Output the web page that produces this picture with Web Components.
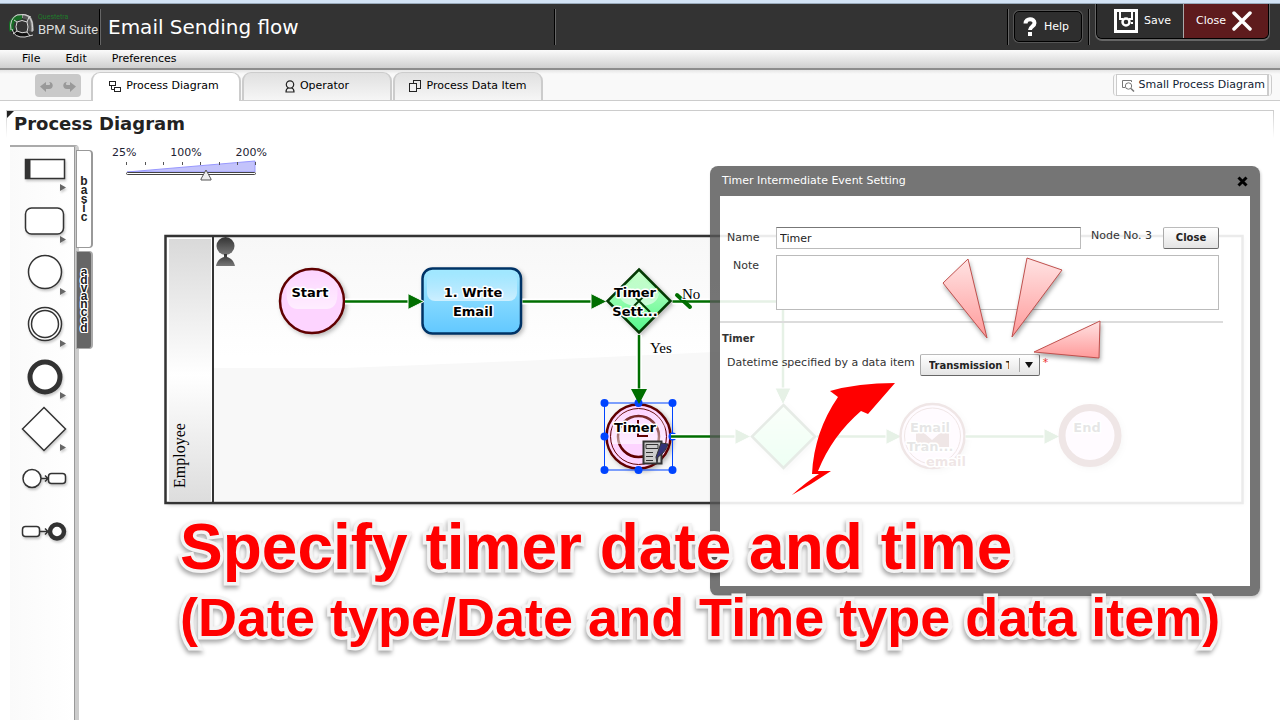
<!DOCTYPE html>
<html lang="en">
<head>
<meta charset="utf-8">
<title>Email Sending flow</title>
<style>
  html, body { height: 100%; margin: 0; }
  body { font: 11px/14px "DejaVu Sans", sans-serif; color: #000; background: #fff; overflow: hidden; }
</style>
</head>
<body>
<app-shell>
  <title-bar slot="title" heading="Email Sending flow"></title-bar>
  <menu-bar slot="menu"></menu-bar>
  <tab-strip slot="tabs"></tab-strip>
  <work-area>
    <shape-palette slot="palette"></shape-palette>
    <zoom-slider slot="zoom"></zoom-slider>
    <flow-diagram slot="diagram"></flow-diagram>
    <event-dialog slot="dialog"></event-dialog>
    <big-caption slot="caption"><span slot="first">Specify timer date and time</span><span slot="second">(Date type/Date and Time type data item)</span></big-caption>
  </work-area>
</app-shell>

<script>
const define = (name, html, setup) => customElements.define(name, class extends HTMLElement {
  constructor() {
    super();
    this.attachShadow({ mode: "open" }).innerHTML = html;
    if (setup) setup(this, this.shadowRoot);
  }
});

define("app-shell", `
<style>
  :host { display: flex; flex-direction: column; min-height: 100vh; border-top: 3px solid #d3e3f5; box-sizing: border-box; }
  .work { flex: 1; display: flex; min-width: 0; }
</style>
<slot name="title"></slot><slot name="menu"></slot><slot name="tabs"></slot>
<div class="work"><slot></slot></div>`);

define("title-bar", `
<style>
  :host { display: block; background: #333; border-top: 1px solid #9ab; }
  header { display: flex; height: 46px; }
  .logo { display: flex; gap: 3px; width: 90px; padding: 9px 0 0 9px; }
  .brand { display: flex; flex-direction: column; font: 13px/15px Roboto, sans-serif; color: #ddd; white-space: nowrap; }
  .brand small { font: 7px/9px Roboto, sans-serif; color: #1f7a2b; }
  .sep { width: 1px; margin: 5px 0; background: #000; border-right: 1px solid #666; }
  h1 { width: 453px; margin: 0; padding-left: 7px; box-sizing: border-box; font: 20px/46px "DejaVu Sans", sans-serif; color: #fff; }
  .gap { flex: 1; }
  button { font: 11px/14px "DejaVu Sans", sans-serif; color: #fff; display: flex; align-items: center; border: 0; padding: 0; background: #2e2e2e; }
  .help { height: 31px; margin: 7px 6px 0 5px; width: 68px; gap: 7px; padding-left: 8px; border: 1px solid #000; border-radius: 5px; box-shadow: 0 0 0 1px #555; }
  .actions { display: flex; height: 35px; margin: 0 11px 0 6px; border-radius: 0 0 6px 6px; overflow: hidden; border: 1px solid #000; border-top: 0; box-shadow: 0 1px 0 1px #666; box-sizing: border-box; }
  .save { width: 87px; gap: 6px; padding-left: 17px; border-right: 1px solid #aaa; }
  .close { width: 84px; gap: 6px; padding-left: 12px; background: #5e1b1d; }
</style>
<header>
  <div class="logo">
    <svg width="26" height="26" viewBox="0 0 26 26" fill="none">
      <path d="M4 8Q6 3 13 3q8 0 9 6l1 9" stroke="#999" stroke-width="4"/>
      <path d="M3 18C0 9 5 4 13 4" stroke="#176b25" stroke-width="5"/>
      <path d="M14 4q5 0 6 5l1 9" stroke="#555" stroke-width="3"/>
      <path d="M4 18q4 5 16 4" stroke="#111" stroke-width="4"/>
      <path d="M2 17Q0 6 8 2q8-2 14 2M3 16q2 9 13 8l8-2M8 9q5-3 10 0 2 5 0 10-5 2-10-1-2-4 0-9zM8 9L5 7M18 9l2-5q5 5 3 15M8 18l-4 3M18 19l3 4" stroke="#d8d8d8"/>
    </svg>
    <div class="brand"><small>Questetra</small><span>BPM Suite</span></div>
  </div>
  <div class="sep"></div>
  <h1></h1>
  <div class="sep"></div>
  <div class="gap"></div>
  <div class="sep"></div>
  <button class="help"><svg width="14" height="20" viewBox="0 0 14 20"><path d="M2.500 6.500C2.500 0.800 11.500 0.800 11.500 6c0 3.500-4.500 3.500-4.500 7" fill="none" stroke="#fff" stroke-width="4"/><rect x="5" y="15" width="4" height="4" fill="#fff"/></svg>Help</button>
  <div class="sep"></div>
  <div class="actions">
    <button class="save"><svg width="24" height="24" viewBox="0 0 24 24" fill="none" stroke="#fff"><path d="M1.500 1.500h21v21h-21z" stroke-width="3"/><path d="M6 2v8h3M18 2v8h-3" stroke-width="2"/><circle cx="12" cy="13" r="3.500" stroke-width="2.500"/><path d="M17 14h2" stroke-width="2"/></svg>Save</button>
    <button class="close">Close<svg width="20" height="20" viewBox="0 0 20 20"><path d="M2 2l16 16M18 2L2 18" stroke="#fff" stroke-width="3.500" stroke-linecap="round"/></svg></button>
  </div>
</header>`, (host, root) => root.querySelector("h1").textContent = host.getAttribute("heading") || "Email Sending flow");

define("menu-bar", `
<style>
  :host { display: block; background: linear-gradient(#fbfbfb, #cfcfcf); border-bottom: 2px solid #8c8c8c; }
  nav { display: flex; gap: 25px; height: 18px; padding-left: 22px; }
  a { color: #000; text-decoration: none; line-height: 18px; }
</style>
<nav><a href="#file">File</a><a href="#edit">Edit</a><a href="#preferences">Preferences</a></nav>`);

define("tab-strip", `
<style>
  :host { display: flex; height: 30px; background: linear-gradient(#e6e6e6, #f9f9f9 4px); border-bottom: 1px solid #ccc; padding: 0 8px 0 35px; }
  button { font: 11px/14px "DejaVu Sans", sans-serif; color: #000; border: 0; padding: 0; }
  .history { display: flex; align-items: center; gap: 8px; height: 23px; margin: 4px 10px 0 0; padding: 0 5px; background: #c9c9c9; border-radius: 4px; }
  .history button { background: none; display: flex; }
  .tabs { display: flex; gap: 1px; margin: 2px 0 0; }
  .tabs button { display: flex; align-items: center; justify-content: center; gap: 5px; width: 150px; height: 28px; padding-bottom: 1px; box-sizing: border-box; border: 1px solid #ccc; border-width: 1px 2px 0; border-radius: 9px 9px 0 0; background: linear-gradient(#e0e0e0, #f6f6f6); }
  .tabs .on { height: 29px; background: #fff; padding: 0 4px 2px 0; }
  .gap { flex: 1; }
  .holder { margin-top: 4px; height: 22px; padding: 0 2px; border: solid #ccc; border-width: 0 1px; border-radius: 4px; }
  .small { display: flex; align-items: center; gap: 4px; height: 22px; padding: 0 2px 0 4px; box-sizing: border-box; border: 1px solid #ccc; border-right-width: 2px; background: #fff; color: #123; }
</style>
<div class="history">
  <button aria-label="Undo"><svg width="14" height="14" viewBox="0 0 14 14"><path d="M0 7.500L6 3v3h3c1.500 0 1.500-2 0-3 5 0 5 7 0 7H6v3z" fill="#999"/></svg></button>
  <button aria-label="Redo"><svg width="14" height="14" viewBox="0 0 14 14"><path d="M14 7.500L8 3v3H5C3.500 6 3.500 4 5 3c-5 0-5 7 0 7h3v3z" fill="#999"/></svg></button>
</div>
<div class="tabs">
  <button class="on"><svg width="12" height="12" viewBox="0 0 12 12" fill="none" stroke="#222"><rect x=".5" y="1.500" width="6" height="4"/><rect x="5.500" y="7.500" width="6" height="4"/><path d="M2.500 6v3.500H5"/></svg>Process Diagram</button>
  <button><svg width="10" height="13" viewBox="0 0 10 13" fill="none" stroke="#222" stroke-width="1.200"><circle cx="5" cy="4.500" r="3.700"/><path d="M3.500 8C1.500 8.500 1 10 1 12h8c0-2-.5-3.500-2.500-4"/></svg>Operator</button>
  <button><svg width="12" height="12" viewBox="0 0 12 12" fill="none" stroke="#222"><rect x="4.500" y=".5" width="7" height="8"/><rect x=".5" y="3.500" width="7" height="8" fill="#eee"/></svg>Process Data Item</button>
</div>
<div class="gap"></div>
<div class="holder"><button class="small"><svg width="14" height="13" viewBox="0 0 14 13" fill="none" stroke="#777"><path d="M4 8.500H1.500v-7h9V3"/><circle cx="7.500" cy="7" r="3.200" fill="#fff"/><path d="M10 9.500l3 3" stroke-width="1.500"/></svg>Small Process Diagram</button></div>`);

define("work-area", `
<style>
  :host { flex: 1; min-width: 0; display: flex; flex-direction: column; position: relative; margin: 9px 6px 0; border-top: 1px solid #ccc; }
  :host::before { content: ""; position: absolute; inset: -1px 0 auto; height: 28px; border: 1px solid #ccc; border-width: 0 1px; -webkit-mask: linear-gradient(#000, transparent); mask: linear-gradient(#000, transparent); }
  .mark { position: absolute; left: 1px; top: 0; width: 7px; height: 7px; background: #222; clip-path: polygon(0 0, 100% 0, 0 100%); }
  h2 { margin: 0; padding: 1px 0 9px 8px; font: bold 18px/24px "DejaVu Sans", sans-serif; color: #222; }
  .row { display: flex; flex: 1; min-width: 0; }
  .canvas { display: flex; flex-direction: column; flex: 1; min-width: 0; }
</style>
<div class="mark"></div>
<h2>Process Diagram</h2>
<div class="row">
  <slot name="palette"></slot>
  <div class="canvas"><slot name="zoom"></slot><slot name="diagram"></slot></div>
</div>
<slot name="dialog"></slot>
<slot name="caption"></slot>`);

const pick = `<path d="M50 35l6 3.500-6 3.500z" fill="#666" stroke="none"/>`;
const shapes = [
  `<rect x="15.500" y="10.500" width="39" height="19"/><path d="M18 10v20" stroke-width="5"/>${pick}`,
  `<rect x="15.500" y="7" width="38" height="26" rx="6"/>${pick}`,
  `<circle cx="35" cy="19" r="16.500"/>${pick}`,
  `<circle cx="35" cy="19" r="16.500"/><circle cx="35" cy="19" r="13.500"/>${pick}`,
  `<circle cx="35" cy="20" r="15" stroke-width="5"/>${pick}`,
  `<path d="M34 -1.500l21.500 21.500-21.500 21.500L12.500 20z"/>${pick}`,
  `<circle cx="22" cy="17.500" r="9"/><path d="M31 17.500h7m-3-3l3 3-3 3"/><rect x="38.500" y="12.500" width="17" height="10" rx="3"/>`,
  `<rect x="12.500" y="13.500" width="17" height="10" rx="3"/><path d="M30 18.500h8m-3-3l3 3-3 3"/><circle cx="47" cy="18.500" r="7" stroke-width="4.500"/>`
];
define("shape-palette", `
<style>
  :host { display: flex; flex: none; width: 87px; margin-left: 4px; }
  .rail { flex: none; width: 65px; display: flex; flex-direction: column; padding-top: 2px; border-top: 2px solid #aaa; border-right: 4px solid #ccc; border-top-right-radius: 4px; background: linear-gradient(90deg, #fafafa, #fff); box-shadow: inset -1px 0 #999; }
  .rail svg { display: block; width: 66px; height: 52px; overflow: visible; filter: drop-shadow(1px 2px 1px #0003); }
  .side { display: flex; flex-direction: column; gap: 3px; margin: 5px 0 0 -3px; }
  .side button { display: flex; align-items: center; justify-content: center; width: 17px; height: 98px; padding: 0; box-sizing: border-box; border: 1px solid #999; border-right-width: 2px; border-radius: 0 4px 4px 0; background: #fff; color: #222; font: bold 12px/9px "Liberation Sans", sans-serif; }
  .side span { width: 9px; word-break: break-all; text-align: center; }
  .side .adv { background: #666; line-height: 8px; border-color: #aaa; text-shadow: 1px 0 #fff, -1px 0 #fff, 0 1px #fff, 0 -1px #fff, 1px 1px #fff, -1px -1px #fff, -1px 1px #fff, 1px -1px #fff; }
</style>
<div class="rail">${shapes.map(s => `<svg viewBox="0 0 66 52" fill="#fff" stroke="#333" stroke-width="1.500">${s}</svg>`).join("")}</div>
<div class="side"><button><span>basic</span></button><button class="adv"><span>advanced</span></button></div>`);

define("zoom-slider", `
<style>
  :host { display: block; width: 160px; padding: 1px 0 24px 15px; color: #223; }
  .marks { display: flex; justify-content: space-between; line-height: 14px; width: 155px; }
  .scale { display: grid; width: 132px; margin-left: 13px; }
  .scale > * { grid-area: 1 / 1; }
  svg { display: block; }
  input { -webkit-appearance: none; appearance: none; width: 132px; height: 22px; margin: 0; background: none; }
  input::-webkit-slider-thumb { -webkit-appearance: none; width: 12px; height: 12px; margin-top: 7px; background: url("data:image/svg+xml,%3Csvg xmlns='http://www.w3.org/2000/svg' width='12' height='12'%3E%3Cpath d='M6 1L11 10V11H1V10Z' fill='%23eee' stroke='%23555'/%3E%3C/svg%3E"); }
</style>
<div class="marks"><span>25%</span><span>100%</span><span>200%</span></div>
<div class="scale">
  <svg width="132" height="22" viewBox="0 0 132 22" fill="none"><path d="M2 12L130 1v11z" fill="#c3c3fb" stroke="#99f"/><path d="M1.500 2v3M20.500 2v3M38.500 2v3M57.500 2v3M75.500 2v3M94.500 2v3M112.500 2v3M130.500 2v3" stroke="#555"/><rect x="1.500" y="12.500" width="129" height="2" rx="1" fill="#fff" stroke="#444"/></svg>
  <input type="range" min="0" max="200" value="125" aria-label="Zoom">
</div>`);

const wire = (d, head) => `<path d="${d}" stroke="#fff" stroke-width="6"/><path d="${d}" stroke="#006e00" stroke-width="2.500"/>${head ? `<path d="${head}" fill="#006e00" stroke="#fff" stroke-width="1"/>` : ""}`;
const handles = [[604.5,403],[672.5,403],[604.5,436.5],[672.5,436.5],[604.5,470],[638.500,470],[672.5,470],[638.500,403]];
define("flow-diagram", `
<style>
  :host { display: block; overflow: hidden; margin-right: -6px; }
  svg { display: block; }
  .label { font: bold 13px "DejaVu Sans", sans-serif; text-anchor: middle; fill: #000; stroke: #fff; stroke-width: 3px; stroke-linejoin: round; paint-order: stroke; }
  .serif { font: 15px "Liberation Serif", serif; fill: #000; stroke: #fff; stroke-width: 2px; paint-order: stroke; }
  .node { filter: drop-shadow(2px 2px 2px #0004); }
</style>
<svg width="1183" height="310" viewBox="97 206 1183 310" fill="none">
  <defs>
    <linearGradient id="lane" x1="0" x2="0" y1="0" y2="1"><stop stop-color="#f7f7f7"/><stop offset=".45" stop-color="#fff"/></linearGradient>
    <linearGradient id="side" x1="0" x2="0" y1="0" y2="1"><stop stop-color="#d9d9d9"/><stop offset=".52" stop-color="#fff"/><stop offset="1" stop-color="#ddd"/></linearGradient>
    <linearGradient id="task" x1="0" x2="0" y1="0" y2="1"><stop stop-color="#a4e9ff"/><stop offset="1" stop-color="#62c8ff"/></linearGradient>
    <linearGradient id="gate" x1="0" x2="0" y1="0" y2="1"><stop stop-color="#cfc"/><stop offset="1" stop-color="#52f98b"/></linearGradient>
    <linearGradient id="gloss" x1="0" x2="0" y1="0" y2="1"><stop stop-color="#fff" stop-opacity="0"/><stop offset="1" stop-color="#fff" stop-opacity=".6"/></linearGradient>
    <linearGradient id="man" x1="0" x2="0" y1="0" y2="1"><stop stop-color="#333"/><stop offset="1" stop-color="#777"/></linearGradient>
  </defs>
  <rect x="165.500" y="235.500" width="1077" height="267" fill="#fff" class="node"/>
  <rect x="214" y="237" width="1027" height="264" fill="url(#lane)"/>
  <path d="M214 368H345Q620 358 1241 325V501H214z" fill="#f8f8f8"/>
  <rect x="169" y="239" width="42" height="262" fill="url(#side)"/>
  <rect x="165.500" y="236" width="1077" height="267" stroke="#333" stroke-width="2.500"/>
  <path d="M213 236v266" stroke="#333" stroke-width="2"/>
  <circle cx="225.500" cy="246" r="9" fill="url(#man)"/><path d="M224 254h3v3c4 1 7 4 8 9h-19c1-5 4-8 8-9z" fill="url(#man)"/>
  <text class="serif" style="font-size:16px;stroke:none" transform="translate(185 488) rotate(-90)">Employee</text>

  <g class="node" stroke="#600000" stroke-width="2.500"><circle cx="312" cy="301" r="32" fill="#fdd4ff"/></g>
  <path d="M287 283q25-24 50 0 3 26-10 26h-30q-13 0-10-26z" fill="url(#gloss)"/>
  <rect class="node" x="422.500" y="268.500" width="98.500" height="65" rx="10" fill="url(#task)" stroke="#036" stroke-width="2.500"/>
  <rect x="427" y="272" width="90" height="29" rx="8" fill="url(#gloss)"/>
  ${wire("M345 301.500H410", "M408 293.500L424 301.500 408 309.500z")}
  ${wire("M522.500 301.500H593", "M591 293.500L607 301.500 591 309.500z")}
  <path class="node" d="M639 269.500L670.500 301 639 332.500 607.500 301z" fill="url(#gate)" stroke="#043a04" stroke-width="2.500"/>
  <path d="M619 294L639 274l20 20q-2 12-20 12t-20-12z" fill="url(#gloss)"/>
  <path d="M628 290l22 22M650 290l-22 22" stroke="#043a04" stroke-width="2"/>
  ${wire("M672.500 301.500H783V390", "M775 388h16L783 405z")}
  ${wire("M639 335V391", "M631 389h16L639 405z")}
  <path d="M677 295l13 12" stroke="#006e00" stroke-width="4" stroke-linecap="round"/>
  <text class="serif" x="682" y="299">No</text>
  <text class="serif" x="650" y="353">Yes</text>

  <g stroke="#600000"><circle class="node" cx="638.500" cy="436.500" r="32" fill="#fdd4ff" stroke-width="2.500"/><circle cx="638.500" cy="436.500" r="28"/><circle cx="638.500" cy="436.500" r="20.500" stroke-width="2.500"/></g>
  <path d="M612 422q26-30 53 0v22h-53z" fill="url(#gloss)"/>
  <path d="M638 420v16h10" stroke="#600000" stroke-width="2"/>
  ${wire("M672.500 436.500H737", "M735 428.500L751 436.500 735 444.500z")}
  <rect x="604.500" y="403" width="68" height="67" stroke="#04f"/>
  ${handles.map(([x, y]) => `<circle cx="${x}" cy="${y}" r="4" fill="#04f"/>`).join("")}
  <path d="M631 389h16L639 404z" fill="#006e00"/>
  <path d="M671 436.500h10" stroke="#fff" stroke-width="5"/><path d="M671 436.500h10" stroke="#006e00" stroke-width="2.500"/>
  <path d="M643.500 441.500h18v22h-18z" fill="#ccc" stroke="#333" stroke-width="2"/><path d="M646 444.500h12v4h-12zM646 452.500h7M646 456.500h7M646 460.500h7" stroke="#333"/><path d="M656 457l5-14 7 1q-2 8-10 13l-1 6z" fill="#337" stroke="#333"/>

  <path class="node" d="M783.500 405L815 436.500 783.500 468 752 436.500z" fill="url(#gate)" stroke="#043a04" stroke-width="2.500"/>
  ${wire("M817 436.500H888", "M886 428.500L902 436.500 886 444.500z")}
  <g stroke="#600000" fill="#fdd4ff"><circle class="node" cx="932.500" cy="436" r="32" stroke-width="2.500"/><circle cx="932.500" cy="436" r="28"/></g>
  <path d="M916 433h8l8 7 8-7h9v14h-33z" fill="#600000"/>
  ${wire("M965.500 436.500H1046", "M1044 428.500L1060 436.500 1044 444.500z")}
  <circle class="node" cx="1090" cy="435.500" r="28" fill="#fdd4ff" stroke="#600000" stroke-width="7"/>

  <text class="label" x="310" y="297">Start</text>
  <text class="label" x="473" y="297">1. Write</text><text class="label" x="473" y="316">Email</text>
  <text class="label" x="635" y="297">Timer</text><text class="label" x="635" y="316">Sett...</text>
  <text class="label" x="635" y="432">Timer</text>
  <text class="label" x="930" y="432">Email</text><text class="label" x="930" y="451">Tran...</text>
  <text class="label" x="946" y="466" style="fill:#600000">email</text>
  <text class="label" x="1087" y="432">End</text>
</svg>`);

define("event-dialog", `
<style>
  :host { position: absolute; right: 14px; top: 55px; width: 550px; display: block; color: #333; --frame: rgba(87,87,87,.82); }
  .box { border-radius: 8px; box-shadow: 1px 2px 3px #0003; }
  header { display: flex; justify-content: space-between; align-items: center; height: 30px; padding: 0 12px; border-radius: 8px 8px 0 0; background: var(--frame); color: #fff; }
  header button { width: 11px; height: 11px; padding: 0; border: 0; background: none; display: flex; }
  form { display: block; height: 390px; border: 10px solid var(--frame); border-top: 0; border-radius: 0 0 8px 8px; background: rgba(255,255,255,.9); background-clip: padding-box; }
  .fields { display: grid; grid-template-columns: 32px 312px 62px 56px; gap: 6px 10px; padding: 31px 0 11px 7px; }
  .fields > label { text-align: right; margin-top: 4px; }
  .fields > input, .fields > textarea { margin-left: 7px; }
  .no { margin-top: 2px; white-space: nowrap; }
  input, textarea { font: 11px/14px "DejaVu Sans", sans-serif; color: #222; box-sizing: border-box; border: 1px solid #bbb; background: #fff; margin: 0; padding: 0 3px; resize: none; border-radius: 0; }
  input { height: 22px; border-top-color: #777; }
  textarea { grid-column: 2 / -1; height: 55px; }
  .close, select { font: bold 10px/14px "DejaVu Sans", sans-serif; color: #222; border: 1px solid #aaa; border-color: #bbb #777 #666 #aaa; border-radius: 2px; background: linear-gradient(#fff, #e4e4e4); }
  .close { height: 22px; padding: 0; }
  hr { margin: 0 27px 0 0; border: 0; height: 2px; background: #dcdcdc; }
  h3 { margin: 9px 0 8px 2px; font: bold 10px/14px "DejaVu Sans", sans-serif; }
  .pick { display: flex; align-items: flex-start; gap: 5px; padding-left: 7px; }
  .pick > label, .req { margin-top: 2px; }
  .holder { position: relative; display: flex; }
  select { -webkit-appearance: none; appearance: none; width: 120px; height: 22px; box-sizing: border-box; padding: 2px 30px 0 8px; text-overflow: clip; }
  .holder svg { position: absolute; right: 3px; top: 4px; pointer-events: none; }
  .req { color: #e33; margin-left: -2px; }
  .rays { position: absolute; left: 0; top: 0; pointer-events: none; overflow: visible; }
  .rays g { filter: drop-shadow(1px 3px 2px #0005); }
</style>
<div class="box" role="dialog" aria-labelledby="t">
  <header><span id="t">Timer Intermediate Event Setting</span><button aria-label="Close dialog"><svg width="11" height="11" viewBox="0 0 11 11"><path d="M1.500 1.500l8 8M9.500 1.500l-8 8" stroke="#000" stroke-width="3"/></svg></button></header>
  <form>
    <div class="fields">
      <label for="name">Name</label><input id="name" value="Timer"><span class="no">Node No. 3</span><button class="close" type="button">Close</button>
      <label for="note">Note</label><textarea id="note"></textarea>
    </div>
    <hr>
    <h3>Timer</h3>
    <div class="pick"><label for="item">Datetime specified by a data item</label>
      <span class="holder"><select id="item"><option>Transmission Time</option></select><svg width="18" height="14" viewBox="0 0 18 14"><path d="M.5 0v14" stroke="#aaa"/><path d="M6 4h8l-4 6z" fill="#111"/></svg></span>
      <span class="req">*</span></div>
  </form>
</div>
<svg class="rays" width="550" height="430" viewBox="710 166 550 430">
  <defs><linearGradient id="pink" x1="0" x2="0" y1="0" y2="1"><stop stop-color="#ffe3e3"/><stop offset="1" stop-color="#ff9a9a"/></linearGradient></defs>
  <g fill="url(#pink)" stroke="#c0504d"><path d="M968 259L943 283 987 338z"/><path d="M1027 258L1062 270 1012 337z"/><path d="M1100 321L1099 358 1034 352z"/></g>
  <path d="M895 383Q858 383 830 391L838 397Q814 432 812 474L819 474Q806 482 792 495 812 484 831 471L818 471Q832 436 861 411L868 414z" fill="#f00"/>
</svg>`);

define("big-caption", `
<style>
  :host { position: absolute; left: 174px; top: 400px; display: flex; flex-direction: column; white-space: nowrap; pointer-events: none; font: bold 64px/72px "Liberation Sans", sans-serif; color: #f00; filter: drop-shadow(-1px 3px 2px #0005); }
  .line { -webkit-text-stroke: 7px #f4f4f4; paint-order: stroke fill; }
  .second { font-size: 54px; line-height: 68px; }
</style>
<div class="line"><slot name="first"></slot></div>
<div class="line second"><slot name="second"></slot></div>`);
</script>
</body>
</html>
